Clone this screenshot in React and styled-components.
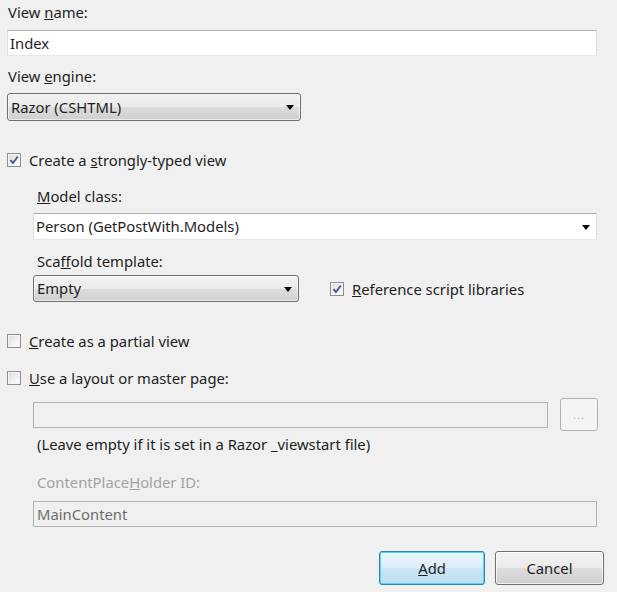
import React from "react";
import styled, { createGlobalStyle, css } from "styled-components";

const Global = createGlobalStyle`
  html, body { margin: 0; padding: 0; background: #f0f0f0; }
  body { font-family: "Noto Sans", "Open Sans", sans-serif; font-size: 14.8px; color: #1e1e1e; }
  * { box-sizing: border-box; }
`;

const Page = styled.div`
  width: 617px;
  height: 592px;
  padding: 0 20px 0 7px;
  display: flex;
  flex-direction: column;
  overflow: hidden;
`;

const Label = styled.div`
  height: 20px;
  line-height: 20px;
  margin-top: ${(p) => p.$mt || 0}px;
  padding-left: ${(p) => (p.$indent ? 4 : 1)}px;
  color: ${(p) => (p.$disabled ? "#a3a3a3" : "#1e1e1e")};
  white-space: nowrap;
`;

const TextBox = styled.div`
  height: 26px;
  margin-top: ${(p) => p.$mt || 0}px;
  border: 1px solid #dbdfe6;
  border-top-color: #abadb3;
  border-bottom-color: #e3e9ef;
  background: ${(p) => (p.$disabled ? "#f0f0f0" : "#ffffff")};
  color: ${(p) => (p.$disabled ? "#6d6d6d" : "#1e1e1e")};
  padding-left: ${(p) => p.$pl || 2}px;
  line-height: 24px;
  flex: ${(p) => (p.$grow ? 1 : "none")};
  ${(p) =>
    p.$disabled &&
    css`
      border-color: #adb2b5;
    `}
`;

const Arrow = styled.span`
  position: absolute;
  right: 6px;
  top: 50%;
  margin-top: -2px;
  width: 0;
  height: 0;
  border-left: 4px solid transparent;
  border-right: 4px solid transparent;
  border-top: 5px solid #000;
`;

const ComboButton = styled.div`
  position: relative;
  width: ${(p) => p.$w}px;
  height: ${(p) => p.$h || 28}px;
  margin-top: ${(p) => p.$mt || 0}px;
  border: 1px solid #707070;
  border-radius: 3px;
  background: linear-gradient(#f2f2f2 0%, #ebebeb 50%, #dddddd 51%, #cfcfcf 100%);
  padding-left: 3px;
  line-height: ${(p) => (p.$h || 28) - 2}px;
  box-shadow: inset 0 0 0 1px rgba(255, 255, 255, 0.6);
`;

const ComboEdit = styled.div`
  position: relative;
  height: 27px;
  margin-top: ${(p) => p.$mt || 0}px;
  border: 1px solid #dbdfe6;
  border-top-color: #abadb3;
  border-bottom-color: #e3e9ef;
  background: #ffffff;
  padding-left: 2px;
  line-height: 25px;
`;

const CheckRow = styled.label`
  display: flex;
  align-items: center;
  gap: ${(p) => p.$gap || 8}px;
  height: 20px;
  margin-top: ${(p) => p.$mt || 0}px;
  margin-left: ${(p) => p.$ml || 0}px;
  white-space: nowrap;
`;

const Box = styled.span`
  width: 14px;
  height: 14px;
  flex: none;
  border: 1px solid #8f8f8f;
  background: linear-gradient(135deg, #dcdcdc 0%, #f6f6f6 70%, #ffffff 100%);
  box-shadow: inset 0 0 0 1px #f4f4f4;
  display: flex;
  align-items: center;
  justify-content: center;
`;

const Checkbox = ({ checked }) => (
  <Box>
    {checked && (
      <svg width="10" height="10" viewBox="0 0 10 10">
        <path d="M1.5 5.2 L4 8 L8.8 1.5" fill="none" stroke="#4a5c96" strokeWidth="2" strokeLinejoin="round" />
      </svg>
    )}
  </Box>
);

const Indent = styled.div`
  display: flex;
  flex-direction: column;
  padding-left: 26px;
`;

const Row = styled.div`
  display: flex;
  align-items: ${(p) => p.$align || "center"};
  gap: ${(p) => p.$gap || 0}px;
  margin-top: ${(p) => p.$mt || 0}px;
`;

const BrowseButton = styled.div`
  width: 38px;
  height: 33px;
  flex: none;
  margin-right: -1px;
  border: 1px solid #adb2b5;
  border-radius: 3px;
  background: #f4f4f4;
  color: #c9b49c;
  font-size: 11px;
  letter-spacing: 1px;
  display: flex;
  align-items: center;
  justify-content: center;
`;

const Footer = styled.div`
  display: flex;
  justify-content: flex-end;
  gap: 10px;
  margin-top: 24px;
  margin-right: -7px;
`;

const Button = styled.div`
  width: ${(p) => p.$w}px;
  height: 34px;
  border-radius: 3px;
  display: flex;
  align-items: center;
  justify-content: center;
  border: 1px solid #707070;
  background: linear-gradient(#f2f2f2 0%, #ebebeb 50%, #dddddd 51%, #cfcfcf 100%);
  box-shadow: inset 0 0 0 1px rgba(255, 255, 255, 0.7);
  ${(p) =>
    p.$default &&
    css`
      border: 1px solid #3c7fb1;
      box-shadow: inset 0 0 0 1px #48d8fb;
      background: linear-gradient(#edf6fc 0%, #dcedf8 50%, #cbe6f5 51%, #c0dff0 100%);
    `}
`;

export default function App() {
  return (
    <>
      <Global />
      <Page>
        <Label $mt={2}>
          View <u>n</u>ame:
        </Label>
        <TextBox $mt={8}>Index</TextBox>
        <Label $mt={10}>
          View <u>e</u>ngine:
        </Label>
        <ComboButton $w={294} $mt={7}>
          Razor (CSHTML)
          <Arrow />
        </ComboButton>

        <CheckRow $mt={29}>
          <Checkbox checked />
          <span>
            Create a <u>s</u>trongly-typed view
          </span>
        </CheckRow>

        <Indent>
          <Label $indent $mt={16}>
            <u>M</u>odel class:
          </Label>
          <ComboEdit $mt={7}>
            Person (GetPostWith.Models)
            <Arrow />
          </ComboEdit>
          <Label $indent $mt={11}>
            Sca<u>f</u>fold template:
          </Label>
          <Row $mt={4}>
            <ComboButton $w={266} $h={27}>
              Empty
              <Arrow />
            </ComboButton>
            <CheckRow $ml={31}>
              <Checkbox checked />
              <span>
                <u>R</u>eference script libraries
              </span>
            </CheckRow>
          </Row>
        </Indent>

        <CheckRow $mt={29}>
          <Checkbox />
          <span>
            <u>C</u>reate as a partial view
          </span>
        </CheckRow>
        <CheckRow $mt={17}>
          <Checkbox />
          <span>
            <u>U</u>se a layout or master page:
          </span>
        </CheckRow>

        <Indent>
          <Row $mt={10} $gap={12}>
            <TextBox $disabled $grow />
            <BrowseButton>...</BrowseButton>
          </Row>
          <Label $indent $mt={3}>
            (Leave empty if it is set in a Razor _viewstart file)
          </Label>
          <Label $indent $disabled $mt={18}>
            ContentPlace<u>H</u>older ID:
          </Label>
          <TextBox $disabled $mt={9} $pl={3}>
            MainContent
          </TextBox>
        </Indent>

        <Footer>
          <Button $w={106} $default>
            <span>
              <u>A</u>dd
            </span>
          </Button>
          <Button $w={109}>Cancel</Button>
        </Footer>
      </Page>
    </>
  );
}
